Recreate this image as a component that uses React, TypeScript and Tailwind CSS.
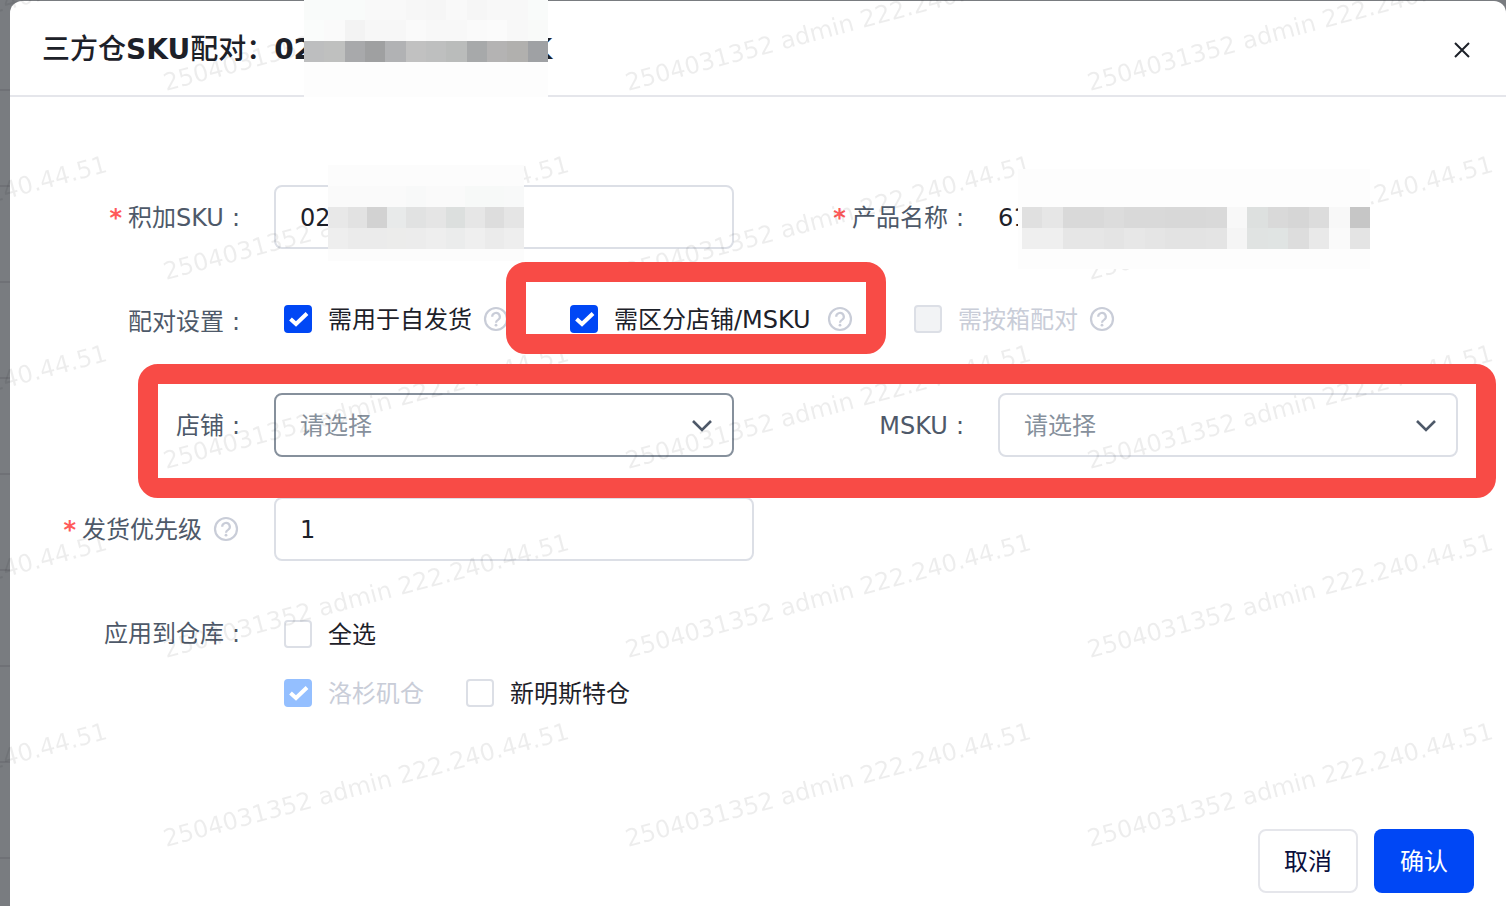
import { useState } from 'react';
import type { ReactNode } from 'react';

const TITLE_MOSAIC = [
  ['#f9fbfa', '#f9fbfa', '#f9fbfa', '#f9f9f9', '#f9f9f9', '#f7f7f7', '#f6f6f6', '#f9f9f9', '#f6f6f6', '#f8f8f8', '#f8f8f8', '#f9fbfa'],
  ['#fafcfb', '#fafafa', '#f3f3f3', '#f7f7f7', '#f7f7f7', '#fafafa', '#f8f8f8', '#f8f8f8', '#fafafa', '#fbfbfb', '#f8f8f8', '#f9faf9'],
  ['#bdbebf', '#bfc0bf', '#a8a9ab', '#9fa0a1', '#b1b2b4', '#c1c1c1', '#bebfbf', '#babcbb', '#a7a9aa', '#b4b3b3', '#b1b0ae', '#9fa1a4'],
];

const SKU_MOSAIC = [
  ['#fafafa', '#fafafa', '#fafafa', '#fafafa', '#f8f9f9', '#fafafa', '#fafafa', '#f7f9f8', '#f7f9f8', '#f8f9f9'],
  ['#e8e8e8', '#e2e2e2', '#d2d2d2', '#e8eaea', '#e1e2e2', '#e5e5e5', '#dcdfde', '#e6e6e6', '#dddddd', '#e5e5e5'],
  ['#eeeeee', '#ebebeb', '#ebebeb', '#ececeb', '#ececec', '#eeeeee', '#ebecec', '#efefef', '#ebebeb', '#eeeeee'],
];

const NAME_MOSAIC = [
  ['#e0e0e0', '#e6e6e6', '#d9d9d9', '#d9d9d9', '#dcdcdc', '#d9d9d9', '#d9d9d9', '#d8d8d8', '#d8d8d8', '#d9d9d9', '#f8f8f8', '#dde0df', '#d9d9d9', '#d6d6d6', '#dcdcdc', '#f8f8f8', '#c6c6c6'],
  ['#efefef', '#efefef', '#e6e6e6', '#e6e6e6', '#e4e4e4', '#e7e7e7', '#e5e5e5', '#e3e3e3', '#e3e3e3', '#e4e4e4', '#f5f5f5', '#e0e3e2', '#e0e4e3', '#dddddd', '#e9e9e9', '#fafafa', '#e4e4e4'],
];

const WATERMARK_X = [-296, 166, 628, 1090];
const WATERMARK_Y = [91, 280, 469, 658, 847];

function Watermark() {
  return (
    <svg className="pointer-events-none fixed inset-0 z-10 h-full w-full" aria-hidden="true">
      {WATERMARK_Y.map((y) =>
        WATERMARK_X.map((x) => (
          <text key={`${x}-${y}`} transform={`translate(${x} ${y}) rotate(-15)`} fontSize="24" fill="#000" fillOpacity="0.07">
            2504031352 admin 222.240.44.51
          </text>
        )),
      )}
    </svg>
  );
}

function Mosaic({ rows, className }: { rows: string[][]; className: string }) {
  return (
    <div className={`pointer-events-none absolute z-20 ${className}`} aria-hidden="true">
      {rows.map((row, i) => (
        <div key={i} className="flex h-[21px]">
          {row.map((color, j) => (
            <div key={j} className="flex-1" style={{ backgroundColor: color }} />
          ))}
        </div>
      ))}
    </div>
  );
}

function HelpIcon() {
  return (
    <svg viewBox="0 0 28 28" className="h-7 w-7 shrink-0" fill="none" stroke="#c9cdd8" strokeWidth="2.2" aria-hidden="true">
      <circle cx="14" cy="14" r="11" />
      <path d="M10.2 11.8a3.8 3.8 0 1 1 5.8 3.1c-1.4.8-2 1.4-2 2.8" />
      <circle cx="14" cy="20.2" r="1.4" fill="#c9cdd8" stroke="none" />
    </svg>
  );
}

interface LabelProps {
  htmlFor?: string;
  required?: boolean;
  help?: boolean;
  children: ReactNode;
}

function Label({ htmlFor, required, help, children }: LabelProps) {
  return (
    <label htmlFor={htmlFor} className="mr-8 flex h-16 w-[232px] shrink-0 items-center justify-end pr-0.5 whitespace-nowrap text-[#4e5969]">
      {required && <span className="mr-1.5 pt-0.5 font-bold text-[#ff5a5a]">*</span>}
      <span className="pt-0.5">{children}</span>
      {help ? (
        <span className="ml-2.5">
          <HelpIcon />
        </span>
      ) : (
        <span className="ml-2 pt-0.5">:</span>
      )}
    </label>
  );
}

interface CheckProps {
  label: string;
  defaultChecked?: boolean;
  disabled?: boolean;
  help?: boolean;
}

function Check({ label, defaultChecked, disabled, help }: CheckProps) {
  return (
    <label className={`flex flex-1 items-center whitespace-nowrap ${disabled ? 'text-[#c9cdd8]' : 'text-[#1d2129]'}`}>
      <span className="relative mr-4 h-7 w-7 shrink-0">
        <input
          type="checkbox"
          defaultChecked={defaultChecked}
          disabled={disabled}
          className="peer block h-7 w-7 appearance-none rounded-sm border-2 border-[#dcdfe6] bg-white checked:border-[#0047f5] checked:bg-[#0047f5] disabled:bg-[#f2f3f5] disabled:checked:border-[#94bfff] disabled:checked:bg-[#94bfff]"
        />
        <svg viewBox="0 0 28 28" className="pointer-events-none invisible absolute inset-0 h-7 w-7 peer-checked:visible" fill="none" stroke="#fff" strokeWidth="4">
          <path d="M6.5 14l5.5 5L23 8.5" />
        </svg>
      </span>
      <span className="pt-0.5">{label}</span>
      {help && (
        <span className="ml-auto pl-2.5">
          <HelpIcon />
        </span>
      )}
    </label>
  );
}

function Select({ id, className }: { id: string; className: string }) {
  return (
    <div className="relative min-w-0 flex-1">
      <select id={id} className={`h-16 w-full appearance-none rounded-lg border-2 bg-white pt-0.5 pl-6 text-[#86909c] ${className}`}>
        <option>请选择</option>
      </select>
      <svg viewBox="0 0 24 24" className="pointer-events-none absolute top-5 right-5 h-6 w-6" fill="none" stroke="#4e5969" strokeWidth="2.6">
        <path d="M3 8l9 9 9-9" />
      </svg>
    </div>
  );
}

export default function App() {
  const [sku, setSku] = useState('02');
  const [priority, setPriority] = useState('1');

  return (
    <div className="flex min-h-screen bg-[#797c80] bg-[linear-gradient(#797c80_94px,#6f7176_94px)] bg-[length:100%_96px] bg-[position:0_-5px] pt-px pl-2.5 font-['DejaVu_Sans','Noto_Sans_CJK_SC',sans-serif] text-2xl">
      <Watermark />
      <div role="dialog" aria-labelledby="dialog-title" className="flex min-w-0 flex-1 flex-col rounded-t-xl bg-white">
        <header className="relative flex h-24 items-center justify-between border-b-2 border-[#e5e6eb] px-8 pt-1">
          <h1 id="dialog-title" className="flex text-[28px] leading-10 font-bold whitespace-nowrap text-[#1d2129]">
            <span className="font-medium">三方仓</span>
            <span>SKU</span>
            <span className="font-medium">配对：</span>
            <span className="flex w-[278px] justify-between">
              <span>02</span>
              <span>K</span>
            </span>
          </h1>
          <button type="button" aria-label="关闭" className="flex h-6 w-6 items-center justify-center">
            <svg viewBox="0 0 16 16" className="h-4 w-4" fill="none" stroke="#1d2129" strokeWidth="2">
              <path d="M1 1l14 14M15 1L1 15" />
            </svg>
          </button>
          <Mosaic rows={TITLE_MOSAIC} className="-top-0.5 left-[294px] h-[98px] w-[244px] bg-[#fdfdfd]" />
        </header>

        <form className="flex flex-col gap-10 pt-[88px] pr-12">
          <div className="grid grid-cols-2">
            <div className="relative flex">
              <Label htmlFor="sku" required>积加SKU</Label>
              <input
                id="sku"
                value={sku}
                onChange={(e) => setSku(e.target.value)}
                className="h-16 min-w-0 flex-1 rounded-lg border-2 border-[#dcdfe6] px-6 pt-0.5 text-[#1d2129]"
              />
              <Mosaic rows={SKU_MOSAIC} className="-top-5 left-[318px] h-24 w-[196px] bg-[#fcfcfc] pt-[21px]" />
            </div>
            <div className="relative flex items-center">
              <Label required>产品名称</Label>
              <span className="pt-0.5 text-[#1d2129]">61</span>
              <Mosaic rows={NAME_MOSAIC} className="-top-4 left-[284px] h-[100px] w-[352px] bg-[#fdfdfd] pt-[38px] pl-1" />
            </div>
          </div>

          <div className="flex">
            <Label>配对设置</Label>
            <div className="flex h-15 gap-15 pl-2.5">
              <div className="flex">
                <Check label="需用于自发货" defaultChecked help />
              </div>
              <div className="relative flex w-[284px]">
                <Check label="需区分店铺/MSKU" defaultChecked help />
                <div className="pointer-events-none absolute -top-[27px] -right-8 -bottom-[5px] -left-16 z-20 rounded-[20px] border-20 border-[#f84b46]" />
              </div>
              <div className="flex">
                <Check label="需按箱配对" disabled help />
              </div>
            </div>
          </div>

          <div className="relative grid grid-cols-2">
            <div className="flex">
              <Label htmlFor="shop">店铺</Label>
              <Select id="shop" className="border-[#86909c]" />
            </div>
            <div className="flex">
              <Label htmlFor="msku">MSKU</Label>
              <Select id="msku" className="border-[#dcdfe6]" />
            </div>
            <div className="pointer-events-none absolute -top-[29px] -right-[38px] -bottom-[41px] left-32 z-20 rounded-[20px] border-20 border-[#f84b46]" />
          </div>

          <div className="flex">
            <Label htmlFor="priority" required help>发货优先级</Label>
            <input
              id="priority"
              value={priority}
              onChange={(e) => setPriority(e.target.value)}
              className="h-16 w-[480px] rounded-lg border-2 border-[#dcdfe6] px-6 pt-0.5 text-[#1d2129]"
            />
          </div>

          <div className="flex">
            <Label>应用到仓库</Label>
            <div className="flex flex-col pl-2.5">
              <div className="flex h-16 pt-0.5">
                <Check label="全选" />
              </div>
              <div className="flex h-14 gap-[42px]">
                <Check label="洛杉矶仓" defaultChecked disabled />
                <Check label="新明斯特仓" />
              </div>
            </div>
          </div>
        </form>

        <footer className="mt-auto flex justify-end gap-4 pr-8 pb-[13px]">
          <button type="button" className="h-16 w-[100px] rounded-lg border-2 border-[#e5e6eb] bg-white pt-0.5 text-[#0a0f3c]">
            取消
          </button>
          <button type="button" className="h-16 w-[100px] rounded-lg bg-[#0047f5] pt-0.5 text-white">
            确认
          </button>
        </footer>
      </div>
    </div>
  );
}
